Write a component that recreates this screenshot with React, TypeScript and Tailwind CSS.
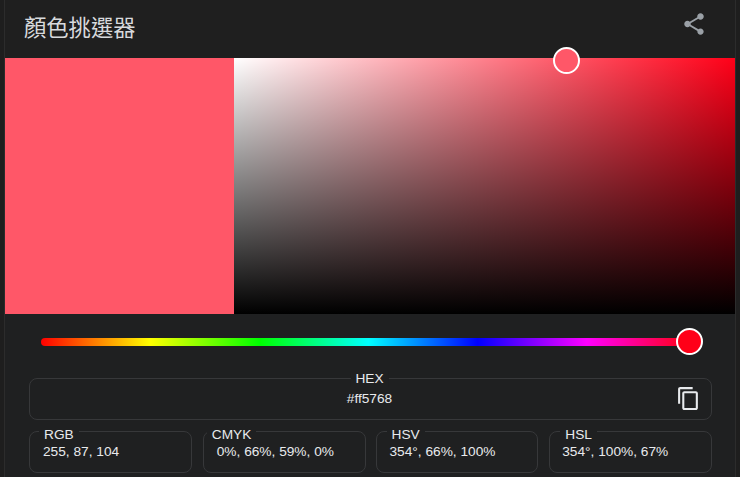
import type { ReactNode } from 'react'

const fields = [
  { label: 'RGB', value: '255, 87, 104', labelClass: 'left-[9px]', boxClass: 'ml-0', valueClass: 'pl-[13px]' },
  { label: 'CMYK', value: '0%, 66%, 59%, 0%', labelClass: 'left-[3px]', boxClass: 'ml-[11px]', valueClass: 'pl-[13px]' },
  { label: 'HSV', value: '354°, 66%, 100%', labelClass: 'left-[10px]', boxClass: 'ml-[10px]', valueClass: 'pl-[13px]' },
  { label: 'HSL', value: '354°, 100%, 67%', labelClass: 'left-[10px]', boxClass: 'ml-[11px]', valueClass: 'pl-[12px]' },
]

function Field({ label, labelClass, children }: { label: string; labelClass: string; children: ReactNode }) {
  return (
    <div className="relative h-[42px] rounded-lg border border-[#37383a] bg-[#1f2021]">
      <span className={`absolute ${labelClass} bg-[#1f2021] px-[5px] text-[13.7px] leading-[16px] text-[#e8eaed]`}>
        {label}
      </span>
      {children}
    </div>
  )
}

export default function App() {
  return (
    <div
      className="h-[477px] w-[740px] overflow-hidden bg-[#1e1e1e] pl-[4px] pr-[4px] font-['Liberation_Sans','Noto_Sans_CJK_TC',sans-serif]"
    >
      <div className="h-full border-x border-[#2c2c2c] bg-[#1f2021]">
        <div className="flex h-[58px] items-center justify-between bg-[#1f1f1f] pl-[19px] pr-[28px]">
          <h1 className="text-[22.3px] font-normal leading-[28px] text-[#d8dadd]">顏色挑選器</h1>
          <svg viewBox="0 0 24 24" className="mb-[10px] h-[26px] w-[26px] fill-[#9aa0a6]">
            <path d="M18 16.08c-.76 0-1.44.3-1.96.77L8.91 12.7c.05-.23.09-.46.09-.7s-.04-.47-.09-.7l7.05-4.11c.54.5 1.25.81 2.04.81 1.66 0 3-1.34 3-3s-1.34-3-3-3-3 1.34-3 3c0 .24.04.47.09.7L8.04 9.81C7.5 9.31 6.79 9 6 9c-1.66 0-3 1.34-3 3s1.34 3 3 3c.79 0 1.5-.31 2.04-.81l7.12 4.16c-.05.21-.08.43-.08.65 0 1.61 1.31 2.92 2.92 2.92 1.61 0 2.92-1.31 2.92-2.92s-1.31-2.92-2.92-2.92z" />
          </svg>
        </div>

        <div className="flex h-[256px]">
          <div className="w-[229px] bg-[#ff5768]" />
          <div className="relative flex-1 bg-[linear-gradient(to_top,#000,transparent),linear-gradient(to_right,#fff,#ff0018)]">
            <div className="absolute left-[319px] top-[-11px] h-[27px] w-[27px] rounded-full border-2 border-white bg-[#ff5768]" />
          </div>
        </div>

        <div className="relative ml-[36px] mr-[39px] mt-[24px] h-[8px] rounded-full bg-[linear-gradient(to_right,#f00,#ff0,#0f0,#0ff,#00f,#f0f,#f00)]">
          <div className="absolute right-[-7px] top-[-10px] h-[27px] w-[27px] rounded-full border-2 border-white bg-[#ff0018]" />
        </div>

        <div className="mx-[24px] mt-[32px] w-[683px]">
          <Field label="HEX" labelClass="top-[-8px] left-[calc(50%-1px)] -translate-x-1/2">
            <p className="pr-[2px] pt-[11px] text-center text-[13.7px] leading-[18px] text-[#e8eaed]">#ff5768</p>
            <svg viewBox="0 0 24 24" className="absolute right-[10px] top-[7px] h-[25px] w-[25px] fill-[#e8eaed]">
              <path d="M16 1H4c-1.1 0-2 .9-2 2v14h2V3h12V1zm3 4H8c-1.1 0-2 .9-2 2v14c0 1.1.9 2 2 2h11c1.1 0 2-.9 2-2V7c0-1.1-.9-2-2-2zm0 16H8V7h11v14z" />
            </svg>
          </Field>
          <div className="mt-[11px] flex">
            {fields.map((f) => (
              <div key={f.label} className={`w-[162.75px] ${f.boxClass}`}>
                <Field label={f.label} labelClass={`top-[-5px] ${f.labelClass}`}>
                  <p className={`pt-[11px] text-[13.7px] leading-[18px] text-[#e8eaed] ${f.valueClass}`}>{f.value}</p>
                </Field>
              </div>
            ))}
          </div>
        </div>
      </div>
    </div>
  )
}
